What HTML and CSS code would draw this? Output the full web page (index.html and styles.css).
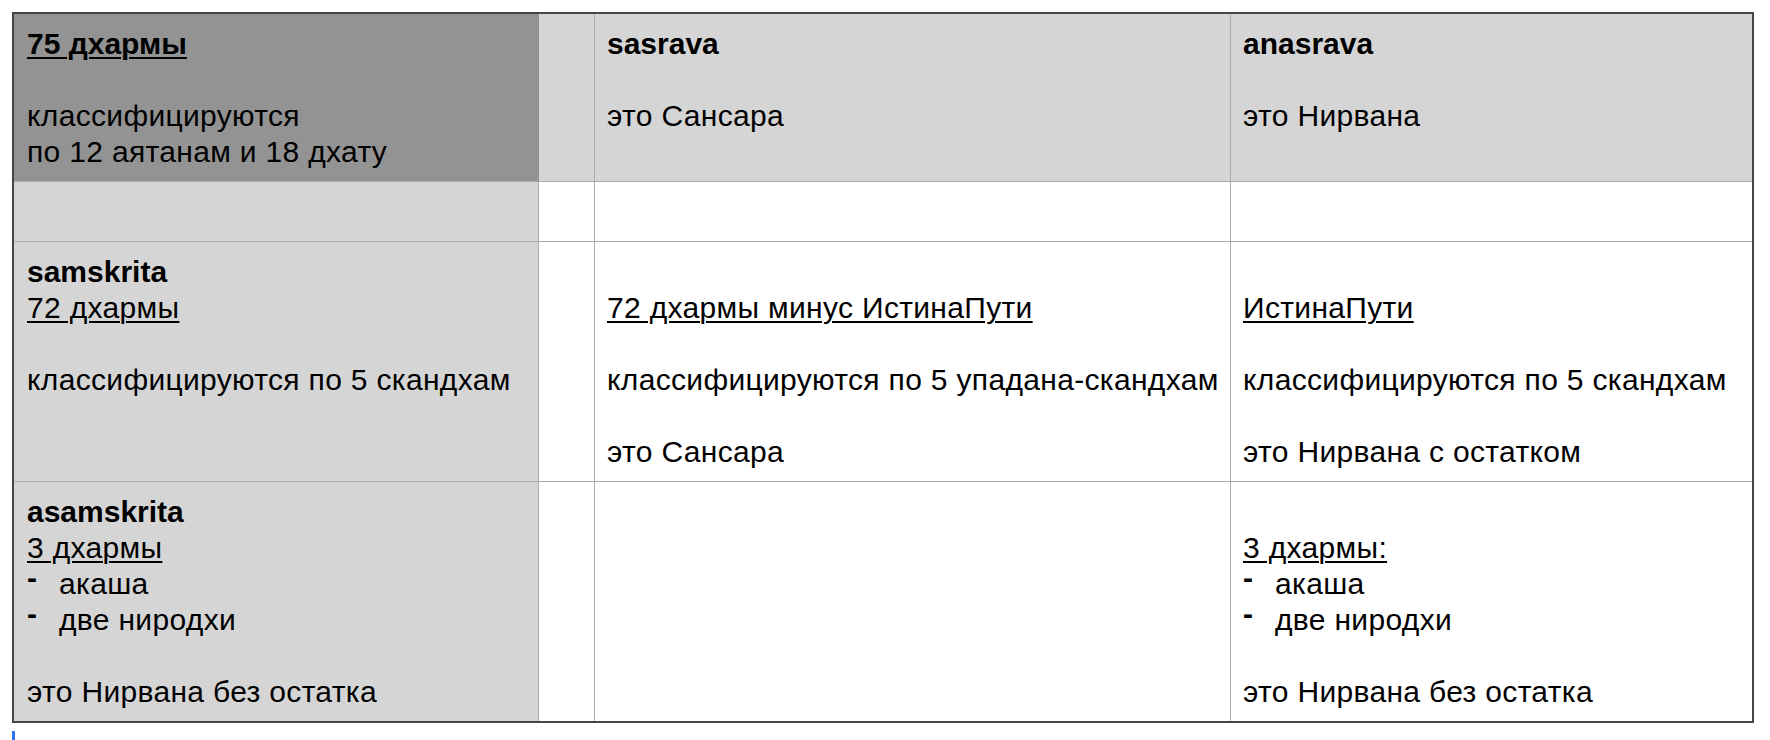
FILE: index.html
```html
<!DOCTYPE html>
<html lang="ru">
<head>
<meta charset="utf-8">
<title>75 дхармы</title>
<link rel="stylesheet" href="styles.css">
</head>
<body>
<div class="page">
  <table class="grid">
    <tr>
      <td class="cell w1 first dark">
        <div class="line"><span class="b u">75 дхармы</span></div>
        <div class="line"></div>
        <div class="line">классифицируются</div>
        <div class="line">по 12 аятанам и 18 дхату</div>
      </td>
      <td class="cell w2 gray"></td>
      <td class="cell w3 gray">
        <div class="line b">sasrava</div>
        <div class="line"></div>
        <div class="line">это Сансара</div>
      </td>
      <td class="cell w4 last gray">
        <div class="line b">anasrava</div>
        <div class="line"></div>
        <div class="line">это Нирвана</div>
      </td>
    </tr>
    <tr>
      <td class="cell first gray"><div class="line"></div></td>
      <td class="cell"><div class="line"></div></td>
      <td class="cell"><div class="line"></div></td>
      <td class="cell last"><div class="line"></div></td>
    </tr>
    <tr>
      <td class="cell first gray">
        <div class="line b">samskrita</div>
        <div class="line"><span class="u">72 дхармы</span></div>
        <div class="line"></div>
        <div class="line">классифицируются по 5 скандхам</div>
      </td>
      <td class="cell"></td>
      <td class="cell">
        <div class="line"></div>
        <div class="line"><span class="u">72 дхармы минус ИстинаПути</span></div>
        <div class="line"></div>
        <div class="line">классифицируются по 5 упадана-скандхам</div>
        <div class="line"></div>
        <div class="line">это Сансара</div>
      </td>
      <td class="cell last">
        <div class="line"></div>
        <div class="line"><span class="u">ИстинаПути</span></div>
        <div class="line"></div>
        <div class="line">классифицируются по 5 скандхам</div>
        <div class="line"></div>
        <div class="line">это Нирвана с остатком</div>
      </td>
    </tr>
    <tr class="bottom">
      <td class="cell first gray">
        <div class="line b">asamskrita</div>
        <div class="line"><span class="u">3 дхармы</span></div>
        <div class="line"><span class="dash">-</span>акаша</div>
        <div class="line"><span class="dash">-</span>две ниродхи</div>
        <div class="line"></div>
        <div class="line">это Нирвана без остатка</div>
      </td>
      <td class="cell"></td>
      <td class="cell"></td>
      <td class="cell last">
        <div class="line"></div>
        <div class="line"><span class="u">3 дхармы:</span></div>
        <div class="line"><span class="dash">-</span>акаша</div>
        <div class="line"><span class="dash">-</span>две ниродхи</div>
        <div class="line"></div>
        <div class="line">это Нирвана без остатка</div>
      </td>
    </tr>
  </table>
  <div class="cursor"></div>
</div>
</body>
</html>
```

FILE: styles.css
```css
html, body {
  margin: 0;
  padding: 0;
  background: #ffffff;
}

body {
  font-family: "Liberation Sans", Arial, Helvetica, sans-serif;
  color: #000000;
}

.page {
  padding: 12px 16px 0 12px;
}

.grid {
  border-collapse: separate;
  border-spacing: 0;
  border: 2px solid #454545;
  width: 1742px;
  box-sizing: border-box;
  table-layout: fixed;
  font-size: 30px;
  line-height: 36px;
  letter-spacing: 0.33px;
}

.cell {
  box-sizing: border-box;
  vertical-align: top;
  padding: 12px 12px 11px 12px;
  border-right: 1px solid #ababab;
  border-bottom: 1px solid #ababab;
  background: #ffffff;
}

.cell.first {
  padding-left: 13px;
}

.cell.last {
  border-right: none;
}

.bottom .cell {
  border-bottom: none;
}

.w1 { width: 525px; }
.w2 { width: 56px; }
.w3 { width: 636px; }
.w4 { width: 521px; }

.dark {
  background: #939393;
  border-right-color: #939393;
}

.gray {
  background: #d5d5d5;
}

.line {
  height: 36px;
  white-space: nowrap;
}

.b {
  font-weight: bold;
  letter-spacing: 0;
}

.u {
  text-decoration: underline;
  text-decoration-thickness: 1.5px;
  text-underline-offset: 3px;
}

.dash {
  display: inline-block;
  width: 32px;
  line-height: 0;
  font-weight: bold;
  letter-spacing: 0;
  vertical-align: 0.2em;
}

.cursor {
  width: 3px;
  height: 16px;
  margin-top: 8px;
  background: #2f6fef;
}
```
